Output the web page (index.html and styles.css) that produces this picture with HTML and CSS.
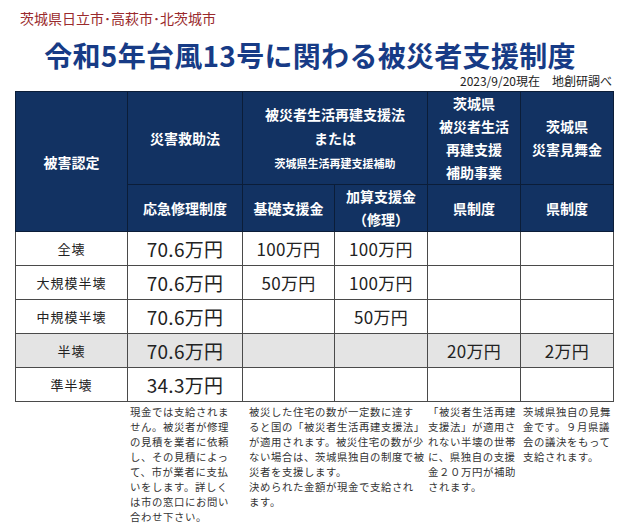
FILE: index.html
```html
<!DOCTYPE html>
<html lang="ja">
<head>
<meta charset="utf-8">
<link rel="stylesheet" href="styles.css">
</head>
<body>
<div class="page">
  <div class="area">茨城県日立市･高萩市･北茨城市</div>
  <h1 class="title">令和5年台風13号に関わる被災者支援制度</h1>
  <div class="date">2023/9/20現在　地創研調べ</div>
  <table class="grid">
    <colgroup>
      <col class="c1"><col class="c2"><col class="c3"><col class="c4"><col class="c5"><col class="c6">
    </colgroup>
    <thead>
      <tr class="h1row">
        <th rowspan="2">被害認定</th>
        <th>災害救助法</th>
        <th colspan="2" class="law">被災者生活再建支援法<br>または<br><span class="small">茨城県生活再建支援補助</span></th>
        <th class="pref">茨城県<br>被災者生活<br>再建支援<br>補助事業</th>
        <th class="pref">茨城県<br>災害見舞金</th>
      </tr>
      <tr class="h2row">
        <th>応急修理制度</th>
        <th>基礎支援金</th>
        <th class="two">加算支援金<br>（修理）</th>
        <th>県制度</th>
        <th>県制度</th>
      </tr>
    </thead>
    <tbody>
      <tr><td class="lab">全壊</td><td class="big">70.6万円</td><td>100万円</td><td>100万円</td><td></td><td></td></tr>
      <tr><td class="lab">大規模半壊</td><td class="big">70.6万円</td><td>50万円</td><td>100万円</td><td></td><td></td></tr>
      <tr><td class="lab">中規模半壊</td><td class="big">70.6万円</td><td></td><td>50万円</td><td></td><td></td></tr>
      <tr class="gray"><td class="lab">半壊</td><td class="big">70.6万円</td><td></td><td></td><td>20万円</td><td>2万円</td></tr>
      <tr><td class="lab">準半壊</td><td class="big">34.3万円</td><td></td><td></td><td></td><td></td></tr>
    </tbody>
  </table>
  <div class="notes">
    <div class="note n0"></div>
    <div class="note n1">現金では支給されま<br>せん。被災者が修理<br>の見積を業者に依頼<br>し、その見積によっ<br>て、市が業者に支払<br>いをします。詳しく<br>は市の窓口にお問い<br>合わせ下さい。</div>
    <div class="note n2">被災した住宅の数が一定数に達す<br>ると国の「被災者生活再建支援法」<br>が適用されます。被災住宅の数が少<br>ない場合は、茨城県独自の制度で被<br>災者を支援します。<br>決められた金額が現金で支給され<br>ます。</div>
    <div class="note n3">「被災者生活再建<br>支援法」が適用さ<br>れない半壊の世帯<br>に、県独自の支援<br>金２０万円が補助<br>されます。</div>
    <div class="note n4">茨城県独自の見舞<br>金です。９月県議<br>会の議決をもって<br>支給されます。</div>
  </div>
</div>
</body>
</html>
```
FILE: styles.css
```css
html, body {
  margin: 0;
  padding: 0;
  background: #ffffff;
}
body {
  font-family: "Noto Sans CJK JP", "Noto Sans", sans-serif;
  color: #222;
}
.page {
  width: 620px;
  height: 525px;
  overflow: hidden;
}
.area {
  padding: 9px 0 0 20px;
  font-size: 14px;
  line-height: 18px;
  color: #9a2a2c;
}
.title {
  margin: 10px 0 0 0;
  text-align: center;
  font-size: 28px;
  line-height: 36px;
  font-weight: 700;
  color: #173b86;
  letter-spacing: 0.3px;
}
.date {
  text-align: right;
  padding-right: 8px;
  margin-top: 0;
  font-size: 12px;
  line-height: 16px;
  color: #222;
}
.grid {
  margin: 2px 0 0 15px;
  border-collapse: collapse;
  table-layout: fixed;
  width: 598px;
  border-top: 1px solid #9aa0a8;
}
.c1 { width: 112px; }
.c2 { width: 115px; }
.c3 { width: 92px; }
.c4 { width: 93px; }
.c5 { width: 93px; }
.c6 { width: 93px; }
.grid th {
  background: #123262;
  color: #fff;
  font-weight: 700;
  font-size: 14px;
  border: 1px solid #0b1d38;
  padding: 0;
  text-align: center;
  vertical-align: middle;
}
.h1row { height: 93px; }
.h2row { height: 45px; }
.grid th.law {
  line-height: 24px;
}
.grid th.law .small {
  font-size: 11px;
  line-height: 16px;
}
.grid th.pref {
  line-height: 23px;
}
.grid th.two {
  line-height: 23px;
}
.grid td {
  border: 1px solid #4a4a4a;
  height: 33px;
  padding: 0;
  text-align: center;
  vertical-align: middle;
  font-size: 17px;
  color: #222;
  letter-spacing: 0.3px;
}
.grid td.lab {
  font-size: 13px;
  letter-spacing: 1px;
}
.grid td.big {
  font-size: 19px;
}
.gray td {
  background: #e4e4e4;
}
.notes {
  display: grid;
  grid-template-columns: 112px 115px 185px 93px 93px;
  margin-left: 15px;
  padding-top: 2px;
  font-size: 10.4px;
  letter-spacing: 0.6px;
  line-height: 15px;
  color: #333;
}
.note { white-space: nowrap; }
.n1 { padding-left: 3px; }
.n2 { padding-left: 7px; }
.n3 { padding-left: 1px; }
.n4 { padding-left: 3px; }
```
